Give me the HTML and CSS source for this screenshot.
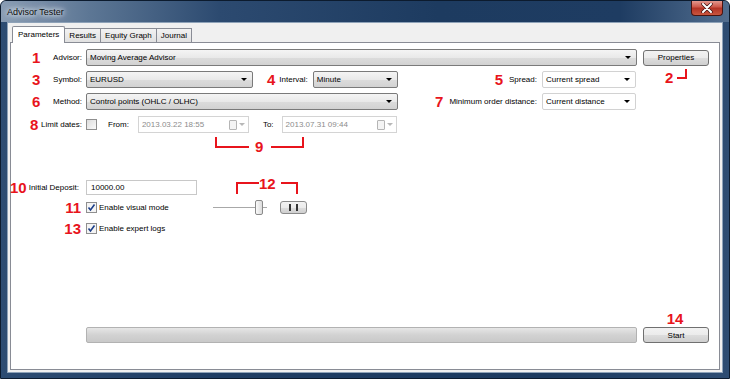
FILE: index.html
```html
<!DOCTYPE html>
<html lang="en">
<head>
  <meta charset="UTF-8">
  <title>Advisor Tester</title>
  <link rel="stylesheet" href="styles.css">
</head>
<body>
  <div class="window">
    <div class="titlebar">
      <span class="title">Advisor Tester</span>
      <div class="close">
        <svg width="12" height="10" viewBox="0 0 12 10">
          <path d="M2 1 L10 9 M10 1 L2 9" stroke="#3a1010" stroke-width="3.4" stroke-linecap="round"/>
          <path d="M2 1 L10 9 M10 1 L2 9" stroke="#fff" stroke-width="2" stroke-linecap="round"/>
        </svg>
      </div>
    </div>

    <div class="client">
      <div class="tabs">
        <div class="tab active">Parameters</div>
        <div class="tab">Results</div>
        <div class="tab">Equity Graph</div>
        <div class="tab">Journal</div>
      </div>

      <div class="panel">
        <!-- row: advisor -->
        <div class="row r1">
          <div class="lbl" style="padding-left:21px"><b class="num">1</b><span class="txt">Advisor:</span></div>
          <div class="combo w-advisor"><span>Moving Average Advisor</span><i class="arrow"></i></div>
          <div class="btn w-props">Properties</div>
        </div>

        <!-- row: symbol / interval / spread -->
        <div class="row r2">
          <div class="lbl" style="padding-left:21px"><b class="num">3</b><span class="txt">Symbol:</span></div>
          <div class="combo w-symbol"><span>EURUSD</span><i class="arrow"></i></div>
          <b class="num n4">4</b>
          <span class="txt t-interval">Interval:</span>
          <div class="combo w-interval"><span>Minute</span><i class="arrow"></i></div>
          <div class="right-group">
            <b class="num">5</b>
            <span class="txt">Spread:</span>
            <div class="combo flat w-small"><span>Current spread</span><i class="arrow"></i></div>
          </div>
        </div>

        <!-- row: method / min distance -->
        <div class="row r3">
          <div class="lbl" style="padding-left:21px"><b class="num">6</b><span class="txt">Method:</span></div>
          <div class="combo w-method"><span>Control points (OHLC / OLHC)</span><i class="arrow"></i></div>
          <div class="right-group">
            <b class="num">7</b>
            <span class="txt">Minimum order distance:</span>
            <div class="combo flat w-small"><span>Current distance</span><i class="arrow"></i></div>
          </div>
        </div>

        <!-- row: dates -->
        <div class="row r4">
          <div class="lbl" style="padding-left:19px"><b class="num">8</b><span class="txt">Limit dates:</span></div>
          <div class="check"></div>
          <span class="txt t-from">From:</span>
          <div class="date w-from"><span>2013.03.22 18:55</span><i class="cal"></i><i class="arrow grey"></i></div>
          <span class="txt t-to">To:</span>
          <div class="date w-to"><span>2013.07.31 09:44</span><i class="cal"></i><i class="arrow grey"></i></div>
        </div>

        <!-- row: deposit -->
        <div class="row r5">
          <div class="lbl lbl-wide"><b class="num">10</b><span class="txt">Initial Deposit:</span></div>
          <div class="edit w-deposit">10000.00</div>
        </div>

        <!-- row: visual mode -->
        <div class="row r6">
          <div class="lbl lbl-right"><b class="num">11</b></div>
          <div class="check on">
            <svg width="9" height="9" viewBox="0 0 9 9"><path d="M1.5 4.5 L3.5 7 L7.5 1.5" fill="none" stroke="#1c3f8a" stroke-width="1.6"/></svg>
          </div>
          <span class="txt t-check">Enable visual mode</span>
          <div class="slider"><div class="track"></div><div class="thumb"></div></div>
          <div class="btn pause"><i></i><i></i></div>
        </div>

        <!-- row: expert logs -->
        <div class="row r7">
          <div class="lbl lbl-right"><b class="num">13</b></div>
          <div class="check on">
            <svg width="9" height="9" viewBox="0 0 9 9"><path d="M1.5 4.5 L3.5 7 L7.5 1.5" fill="none" stroke="#1c3f8a" stroke-width="1.6"/></svg>
          </div>
          <span class="txt t-check">Enable expert logs</span>
        </div>

        <!-- bottom: progress + start -->
        <div class="row bottom">
          <div class="progress"></div>
          <div class="start-col">
            <b class="num">14</b>
            <div class="btn w-props">Start</div>
          </div>
        </div>

        <!-- annotation brackets -->
        <b class="num note n2">2</b>
        <div class="bracket b2"></div>
        <div class="bracket b9l"></div>
        <b class="num note n9">9</b>
        <div class="bracket b9r"></div>
        <div class="bracket b12l"></div>
        <b class="num note n12">12</b>
        <div class="bracket b12r"></div>
      </div>
    </div>
  </div>
</body>
</html>
```

FILE: styles.css
```css
body {
  margin: 0;
  font-family: "Liberation Sans", Arial, sans-serif;
  font-size: 8px;
  color: #000;
  background: #fff;
}

.window {
  width: 730px;
  height: 379px;
  box-sizing: border-box;
  border: 1px solid #0c1b2e;
  border-radius: 6px 6px 0 0;
  background: linear-gradient(to right, #2d4c72, #1f3d63 30%, #1c3a5f 75%, #2d4c72);
  overflow: hidden;
}

.titlebar {
  height: 21px;
  display: flex;
  align-items: center;
  justify-content: space-between;
  padding-left: 6px;
  background: linear-gradient(to right, #8a9db4 0%, #5d7795 12%, #2c4a70 30%, #1d3b60 60%, #1e3c62 85%, #526e8f 100%);
}

.title {
  font-size: 9px;
  color: #0d0d0d;
  text-shadow: 0 0 4px #e4eaf1, 0 0 6px #e4eaf1, 0 0 8px #c8d3df;
}

.close {
  width: 32px;
  height: 16px;
  align-self: flex-start;
  margin-top: -1px;
  margin-right: 6px;
  box-sizing: border-box;
  border: 1px solid #4a1410;
  border-top: none;
  border-radius: 0 0 4px 4px;
  background: linear-gradient(#e7a39a, #cf5a4c 45%, #b33325 55%, #c9563f);
  display: flex;
  align-items: center;
  justify-content: center;
}

.client {
  margin: 0 6px;
  height: 351px;
  box-sizing: border-box;
  border: 1px solid #8ea2b8;
  background: #f0f0f0;
  padding: 3px 2px 2px;
  display: flex;
  flex-direction: column;
}

/* tabs */
.tabs {
  display: flex;
  height: 16px;
  padding-left: 2px;
  align-items: flex-end;
  position: relative;
  z-index: 1;
}

.tab {
  height: 14px;
  box-sizing: border-box;
  padding: 0 4px;
  line-height: 13px;
  border: 1px solid #898c95;
  border-bottom: none;
  background: linear-gradient(#f2f2f2, #e1e1e1);
  margin-right: -1px;
}

.tab.active {
  height: 17px;
  margin-bottom: -1px;
  padding: 0 5px;
  line-height: 15px;
  background: #fff;
  border-radius: 2px 2px 0 0;
  position: relative;
  z-index: 2;
}

.panel {
  flex: 1;
  position: relative;
  border: 1px solid #898c95;
  background: #fff;
  padding: 6px 0 26px;
  display: flex;
  flex-direction: column;
}

/* rows */
.row {
  display: flex;
  align-items: center;
  height: 17px;
}

.r2, .r3 { margin-top: 5px; padding-right: 83px; }
.r4 { margin-top: 6px; }
.r5 { margin-top: 47px; height: 15px; }
.r6 { margin-top: 5px; height: 15px; }
.r7 { margin-top: 6px; height: 15px; }

.bottom {
  margin-top: auto;
  align-items: flex-end;
  height: auto;
}

.lbl {
  width: 71px;
  margin-right: 4px;
  box-sizing: border-box;
  display: flex;
  align-items: center;
  flex-shrink: 0;
}

.lbl .txt { margin-left: auto; }

.lbl-wide { margin-left: -1px; width: 72px; }
.lbl-wide .txt { margin-right: 2px; margin-left: 2px; }

.lbl-right { justify-content: flex-end; padding-right: 1px; }

.num {
  color: #e8141c;
  font-size: 15px;
  line-height: 15px;
  font-weight: bold;
}

.txt { white-space: nowrap; }

/* combo boxes */
.combo {
  height: 17px;
  box-sizing: border-box;
  border: 1px solid #7a7a7a;
  border-radius: 2px;
  background: linear-gradient(#f4f4f4, #e9e9e9 50%, #dcdcdc 51%, #d2d2d2);
  display: flex;
  align-items: center;
  padding: 0 5px 0 3px;
  flex-shrink: 0;
}

.combo.flat {
  border-color: #d2d2d2;
  background: #fff;
}

.combo span, .date span { flex: 1; white-space: nowrap; }

.arrow {
  width: 0;
  height: 0;
  border-left: 3px solid transparent;
  border-right: 3px solid transparent;
  border-top: 3px solid #000;
}

.arrow.grey { border-top-color: #b8b8b8; }

.w-advisor { width: 551px; }
.w-symbol { width: 167px; }
.w-interval { width: 85px; margin-left: 5px; }
.w-method { width: 312px; }
.w-small { width: 94px; margin-left: 5px; }

.n4 { margin-left: 14px; }
.t-interval { margin-left: 4px; }

.right-group {
  margin-left: auto;
  display: flex;
  align-items: center;
}

.right-group .txt { margin-left: 6px; }

/* buttons */
.btn {
  box-sizing: border-box;
  border: 1px solid #707070;
  border-radius: 3px;
  background: linear-gradient(#f2f2f2, #ebebeb 50%, #dddddd 51%, #cfcfcf);
  display: flex;
  align-items: center;
  justify-content: center;
}

.w-props {
  width: 66px;
  height: 16px;
  margin-left: 6px;
}

/* checkbox */
.check {
  width: 11px;
  height: 11px;
  box-sizing: border-box;
  border: 1px solid #8f8f8f;
  background: linear-gradient(135deg, #dcdcdc, #fafafa);
  display: flex;
  align-items: center;
  justify-content: center;
  flex-shrink: 0;
}

.check.on { background: #f4f4f4; }

.t-from { margin-left: 11px; margin-right: 9px; }
.t-to { margin-left: 14px; margin-right: 8px; }

/* date pickers */
.date {
  height: 17px;
  box-sizing: border-box;
  border: 1px solid #d4d4d4;
  color: #8c8c8c;
  display: flex;
  align-items: center;
  padding: 0 3px 0 3px;
}

.w-from { width: 111px; }
.w-to { width: 115px; }

.cal {
  width: 6px;
  height: 8px;
  border: 1px solid #b5b5b5;
  border-radius: 1px;
  background: #f4f4f4;
  margin-right: 2px;
}

/* deposit */
.edit {
  height: 15px;
  box-sizing: border-box;
  border: 1px solid #c8c8c8;
  padding: 0 4px;
  line-height: 13px;
}

.w-deposit { width: 111px; }

.t-check {
  margin-left: 2px;
  width: 114px;
}

/* slider + pause */
.slider {
  position: relative;
  width: 54px;
  height: 15px;
  flex-shrink: 0;
}

.track {
  position: absolute;
  left: 0;
  right: 0;
  top: 7px;
  height: 1px;
  background: #a8a8a8;
}

.thumb {
  position: absolute;
  left: 42px;
  top: 0;
  width: 8px;
  height: 15px;
  box-sizing: border-box;
  border: 1px solid #8a8a8a;
  border-radius: 2px;
  background: linear-gradient(to right, #fafafa, #dcdcdc);
}

.pause {
  width: 27px;
  height: 13px;
  margin-left: 13px;
  gap: 5px;
  border-color: #8a8a8a;
}

.pause i {
  width: 2px;
  height: 7px;
  background: #333;
}

/* bottom */
.progress {
  width: 551px;
  height: 16px;
  margin-left: 75px;
  box-sizing: border-box;
  border: 1px solid #b2b2b2;
  border-radius: 2px;
  background: linear-gradient(#e6e6e6, #d2d2d2 50%, #c9c9c9);
}

.start-col {
  display: flex;
  flex-direction: column;
  align-items: center;
}

.start-col .num { margin-left: 4px; margin-bottom: 1px; }

/* annotations */
.note { position: absolute; }
.n2 { left: 654px; top: 27px; }
.n9 { left: 244px; top: 96px; }
.n12 { left: 248px; top: 133px; }

.bracket {
  position: absolute;
  border-color: #e8141c;
  border-style: solid;
  border-width: 0;
}

.b2 { left: 666px; top: 26px; width: 8px; height: 8px; border-right-width: 2px; border-bottom-width: 2px; }
.b9l { left: 204px; top: 94px; width: 32px; height: 9px; border-left-width: 2px; border-bottom-width: 2px; }
.b9r { left: 260px; top: 94px; width: 31px; height: 9px; border-right-width: 2px; border-bottom-width: 2px; }
.b12l { left: 225px; top: 139px; width: 21px; height: 10px; border-left-width: 2px; border-top-width: 2px; }
.b12r { left: 270px; top: 139px; width: 15px; height: 10px; border-right-width: 2px; border-top-width: 2px; }
```
